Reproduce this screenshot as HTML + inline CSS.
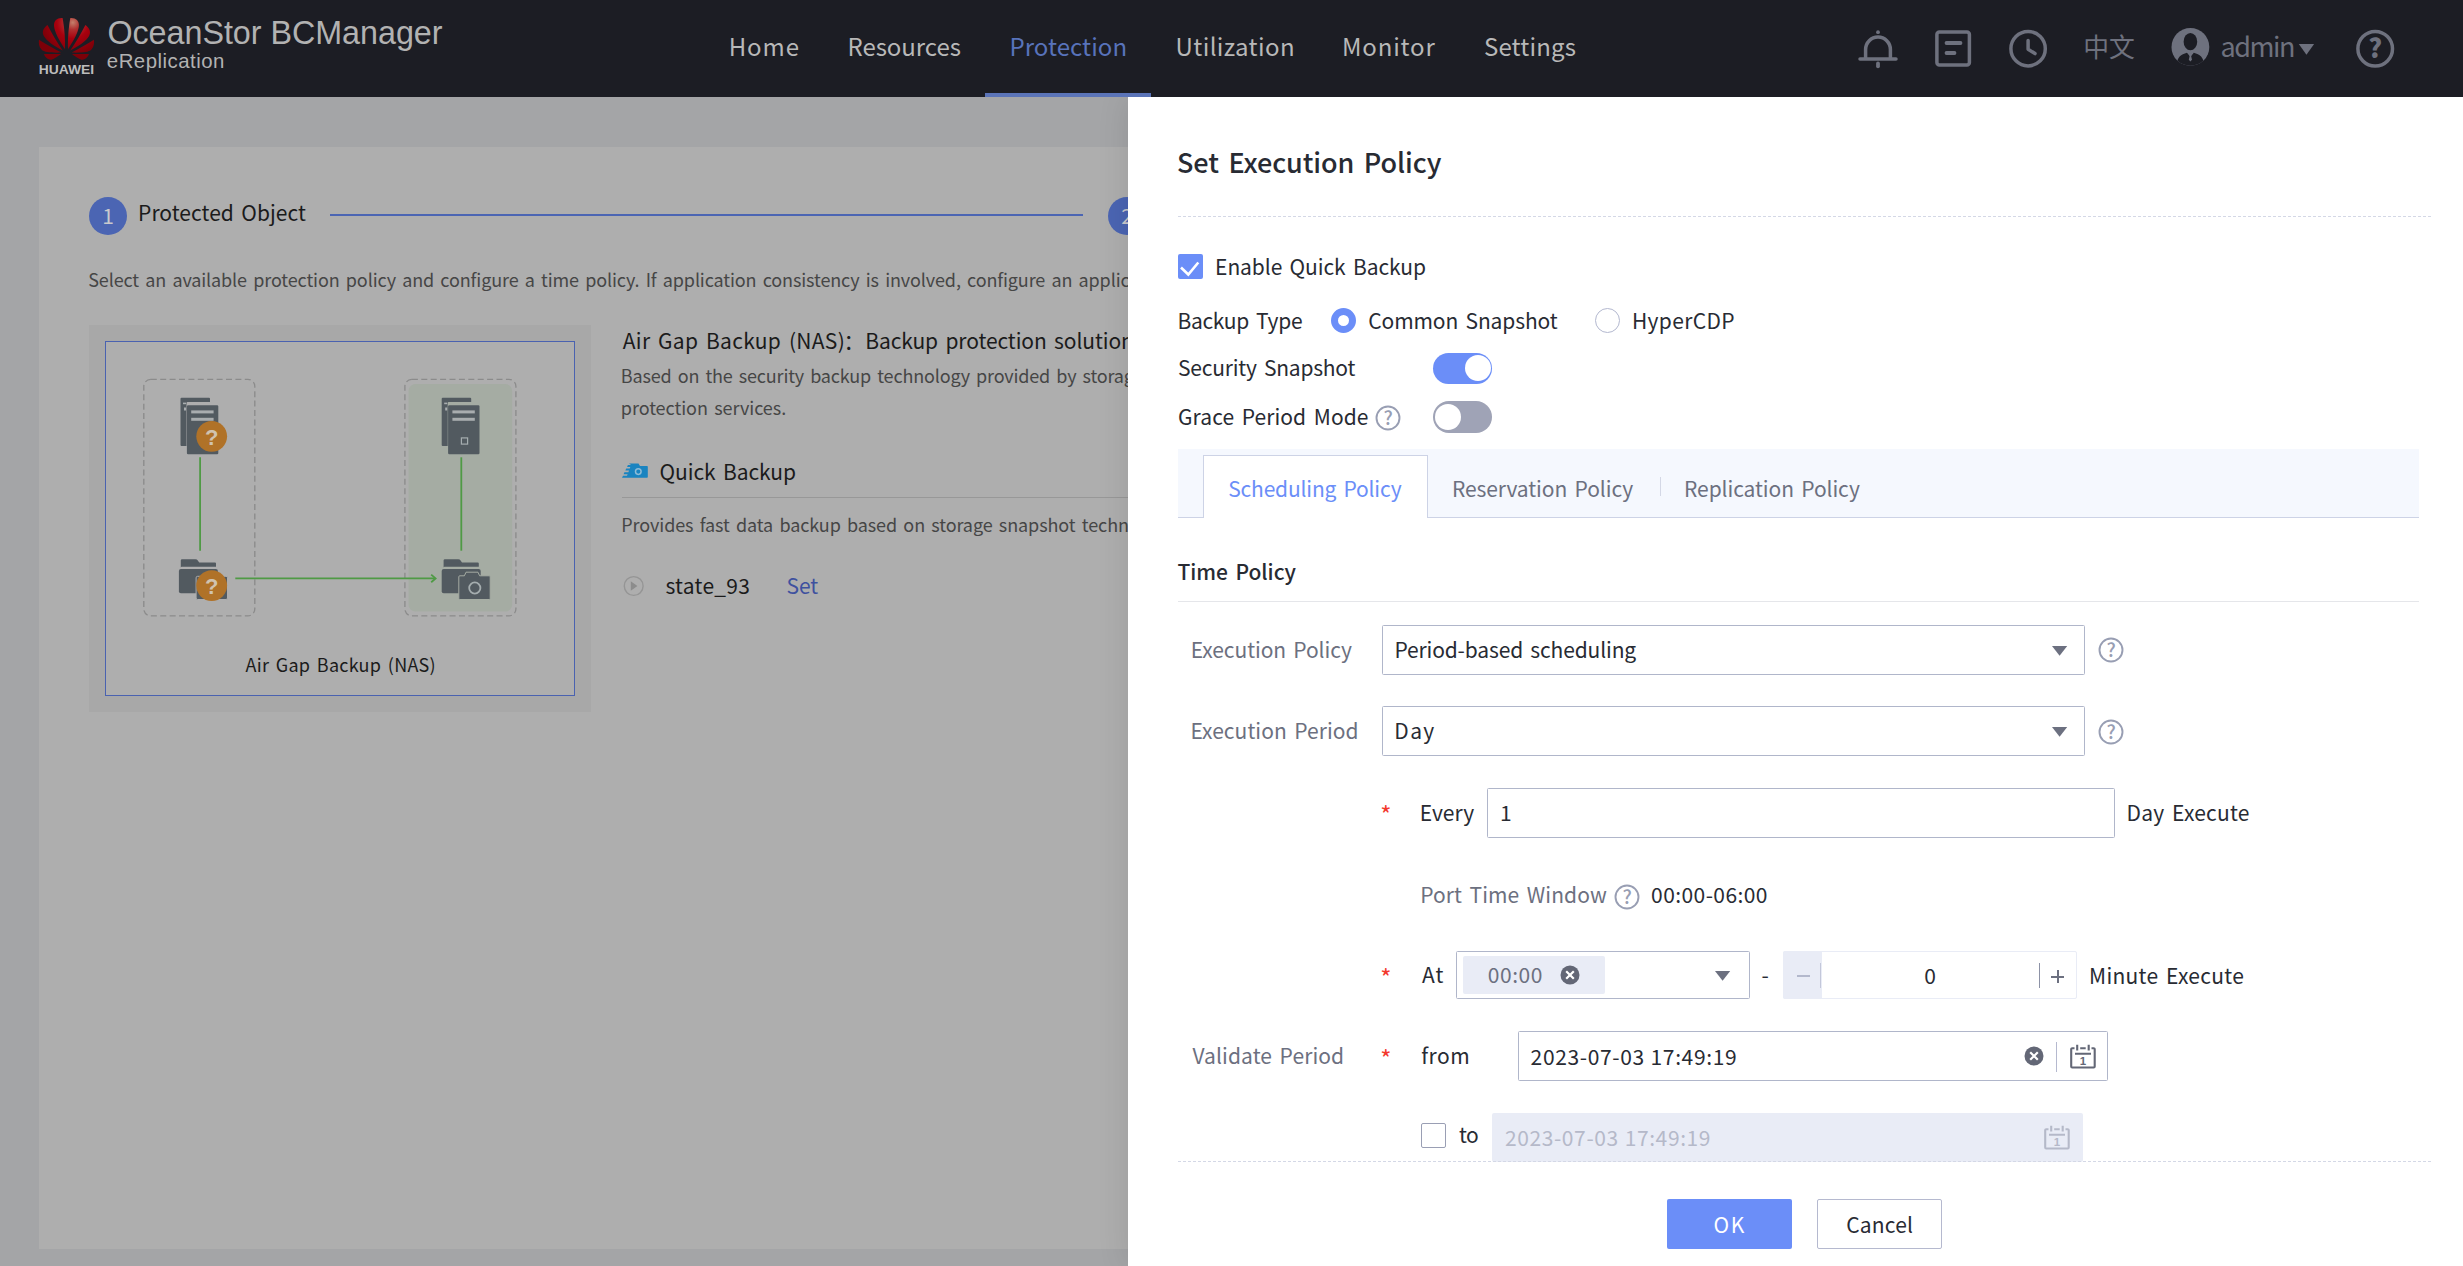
<!DOCTYPE html>
<html><head><meta charset="utf-8"><title>OceanStor BCManager</title>
<style>
html,body{margin:0;padding:0}
body{width:2463px;height:1266px;overflow:hidden;position:relative;background:#a4a5a7;font-family:"Noto Sans CJK SC",sans-serif}
.t{position:absolute;white-space:nowrap;line-height:40px;height:40px}
.b{position:absolute;box-sizing:border-box;display:block}
</style></head><body>
<div class="b" style="left:39px;top:147px;width:1200px;height:1102px;background:#aeaeae"></div>
<div class="b" style="left:89px;top:197px;width:38px;height:38px;background:#4b65b3;border-radius:50%"></div>
<div class="t" style="left:89px;top:195.04px;font-size:21px;color:#c9c9cd;font-family:'Noto Sans CJK SC',sans-serif;letter-spacing:-0.199px;word-spacing:2.73px;width:38px;text-align:center;">1</div>
<div class="t" style="left:138.1px;top:192.34px;font-size:21px;color:#1b1b1b;font-family:'Noto Sans CJK SC',sans-serif;letter-spacing:0.027px;word-spacing:2.73px;">Protected Object</div>
<div class="b" style="left:330px;top:214px;width:753px;height:2px;background:#4b65b3"></div>
<div class="b" style="left:1108px;top:197px;width:38px;height:38px;background:#4b65b3;border-radius:50%"></div>
<div class="t" style="left:1108px;top:195.04px;font-size:21px;color:#c9c9cd;font-family:'Noto Sans CJK SC',sans-serif;letter-spacing:-0.199px;word-spacing:2.73px;width:38px;text-align:center;">2</div>
<div class="t" style="left:88.2px;top:259.25px;font-size:18px;color:#464646;font-family:'Noto Sans CJK SC',sans-serif;letter-spacing:-0.122px;word-spacing:2.34px;">Select an available protection policy and configure a time policy. If application consistency is involved, configure an application consistency policy.</div>
<div class="b" style="left:89px;top:325px;width:502px;height:387px;background:#a8a8a8"></div>
<div class="b" style="left:105px;top:341px;width:470px;height:355px;background:#aeaeae;border:1px solid #4a62b0"></div>
<div class="t" style="left:245.6px;top:644.15px;font-size:18px;color:#1b1b1b;font-family:'Noto Sans CJK SC',sans-serif;letter-spacing:0.242px;word-spacing:2.34px;">Air Gap Backup (NAS)</div>
<svg class="b" style="left:0px;top:0px;" width="700" height="720" viewBox="0 0 700 720">
<rect x="143.8" y="379.3" width="111" height="236.6" rx="7" fill="none" stroke="#8b8b8b" stroke-width="1.3" stroke-dasharray="6 3.4"/>
<rect x="408.5" y="384" width="103.7" height="227.6" rx="7" fill="#a5aca3"/>
<rect x="404.9" y="379.3" width="111" height="236.6" rx="7" fill="none" stroke="#8b8b8b" stroke-width="1.3" stroke-dasharray="6 3.4"/>
<g>
<path d="M181.5 397.7h27.5a1 1 0 0 1 1 1v3.2h-22.5a1 1 0 0 0-1 1v43.1h-5a1 1 0 0 1-1-1v-46.3a1 1 0 0 1 1-1z" fill="#525a60"/>
<rect x="186.9" y="405.3" width="31.4" height="48.9" rx="1.2" fill="#525a60"/>
<rect x="191.2" y="410.4" width="22.4" height="3" fill="#a9adaf"/>
<rect x="191.2" y="417.8" width="22.4" height="3" fill="#a9adaf"/>
<rect x="183" y="402.6" width="3" height="1.6" fill="#a9adaf"/><rect x="184" y="407.5" width="2" height="3" fill="#a9adaf"/>
</g>
<g transform="translate(261.2,0)">
<path d="M181.5 397.7h27.5a1 1 0 0 1 1 1v3.2h-22.5a1 1 0 0 0-1 1v43.1h-5a1 1 0 0 1-1-1v-46.3a1 1 0 0 1 1-1z" fill="#525a60"/>
<rect x="186.9" y="405.3" width="31.4" height="48.9" rx="1.2" fill="#525a60"/>
<rect x="191.2" y="410.4" width="22.4" height="3" fill="#a9adaf"/>
<rect x="191.2" y="417.8" width="22.4" height="3" fill="#a9adaf"/>
<rect x="183" y="402.6" width="3" height="1.6" fill="#a9adaf"/><rect x="184" y="407.5" width="2" height="3" fill="#a9adaf"/>
</g>
<rect x="461.4" y="437.9" width="6.2" height="6.2" fill="#525a60" stroke="#a5adaf" stroke-width="1.2"/>
<line x1="200.1" y1="457.3" x2="200.1" y2="550.7" stroke="#4f9a45" stroke-width="1.8"/>
<line x1="461.3" y1="457.3" x2="461.3" y2="550.7" stroke="#4f9a45" stroke-width="1.8"/>
<g>
<path d="M182 559.3h13.5q1.5 0 2.3 1.2l1.4 2h15.8a1 1 0 0 1 1 1v3.3h-34.2a1 1 0 0 0-1 1v-7.5a1.2 1.2 0 0 1 1.2-1z" fill="#525a60"/>
<rect x="178.9" y="569" width="39" height="24.2" rx="2" fill="#525a60"/>
</g>
<g transform="translate(262.8,0)">
<path d="M182 559.3h13.5q1.5 0 2.3 1.2l1.4 2h15.8a1 1 0 0 1 1 1v3.3h-34.2a1 1 0 0 0-1 1v-7.5a1.2 1.2 0 0 1 1.2-1z" fill="#525a60"/>
<rect x="178.9" y="569" width="39" height="24.2" rx="2" fill="#525a60"/>
</g>
<rect x="196.1" y="576.3" width="31.4" height="23.2" rx="1.5" fill="#525a60" stroke="#aeaeae" stroke-width="1"/>
<line x1="235.3" y1="578.4" x2="434.5" y2="578.4" stroke="#4f9a45" stroke-width="1.8"/>
<path d="M431.2 574.6l4.4 3.8l-4.4 3.8" fill="none" stroke="#4f9a45" stroke-width="1.8"/>
<path d="M466 572.2h12l1.6 3.6h9.6a1 1 0 0 1 1 1v21.7a1 1 0 0 1-1 1h-29.4a1 1 0 0 1-1-1v-21.7a1 1 0 0 1 1-1h4.6z" fill="#525a60" stroke="#a5aca3" stroke-width="1"/>
<circle cx="474.8" cy="588" r="5.6" fill="none" stroke="#a5adaf" stroke-width="1.8"/>
<circle cx="211.7" cy="436.3" r="15.4" fill="#b07228"/>
<circle cx="211.7" cy="585.6" r="15.4" fill="#b07228"/>
<text x="211.7" y="444.6" style="font-family:Liberation Sans,sans-serif" font-size="22" font-weight="700" fill="#d0c3b0" text-anchor="middle">?</text>
<text x="211.7" y="593.9" style="font-family:Liberation Sans,sans-serif" font-size="22" font-weight="700" fill="#d0c3b0" text-anchor="middle">?</text>
</svg>
<div class="t" style="left:622.8px;top:320.14px;font-size:21px;color:#1b1b1b;font-family:'Noto Sans CJK SC',sans-serif;letter-spacing:0.295px;word-spacing:2.73px;">Air Gap Backup (NAS)</div>
<div class="t" style="left:843.5px;top:320.14px;font-size:21px;color:#1b1b1b;font-family:'Noto Sans CJK SC',sans-serif;letter-spacing:-0.199px;word-spacing:2.73px;">：</div>
<div class="t" style="left:865.2px;top:320.14px;font-size:21px;color:#1b1b1b;font-family:'Noto Sans CJK SC',sans-serif;letter-spacing:-0.088px;word-spacing:2.73px;">Backup protection solution for NAS file systems</div>
<div class="t" style="left:620.8px;top:354.65px;font-size:18px;color:#464646;font-family:'Noto Sans CJK SC',sans-serif;letter-spacing:-0.172px;word-spacing:2.34px;">Based on the security backup technology provided by storage, the solution implements Air Gap isolation and provides secure data</div>
<div class="t" style="left:620.8px;top:386.85px;font-size:18px;color:#464646;font-family:'Noto Sans CJK SC',sans-serif;letter-spacing:-0.053px;word-spacing:2.34px;">protection services.</div>
<svg class="b" style="left:622px;top:463px;" width="26" height="15" viewBox="0 0 26 15"><path d="M7 0.5h9.5l1.5 2.5h7a.8.8 0 0 1 .8.8v10.2a.8.8 0 0 1-.8.8h-25l1-2h4l.6-1.6h-4l.8-2h4l.6-1.6h-3.6l.8-2h3.6l.5-1.5h-3.2l.8-2h3.2z" fill="#1a84c0"/>
<circle cx="16.3" cy="8.6" r="2.8" fill="none" stroke="#8dbbd6" stroke-width="1.5"/></svg>
<div class="t" style="left:659.5px;top:450.54px;font-size:21px;color:#1b1b1b;font-family:'Noto Sans CJK SC',sans-serif;letter-spacing:-0.073px;word-spacing:2.73px;">Quick Backup</div>
<div class="b" style="left:622px;top:497px;width:620px;height:1px;background:#989898"></div>
<div class="t" style="left:621.3px;top:504.05px;font-size:18px;color:#464646;font-family:'Noto Sans CJK SC',sans-serif;letter-spacing:-0.096px;word-spacing:2.34px;">Provides fast data backup based on storage snapshot technologies.</div>
<svg class="b" style="left:622px;top:575px;" width="24" height="22" viewBox="0 0 24 22"><circle cx="11.7" cy="11" r="9.4" fill="none" stroke="#959595" stroke-width="1.4"/><path d="M8.8 6.3l6.6 4.7l-6.6 4.7z" fill="#8c8c8c"/></svg>
<div class="t" style="left:665.5px;top:564.84px;font-size:21px;color:#1b1b1b;font-family:'Noto Sans CJK SC',sans-serif;letter-spacing:0.257px;word-spacing:2.73px;">state_93</div>
<div class="t" style="left:786.5px;top:564.84px;font-size:21px;color:#3e519f;font-family:'Noto Sans CJK SC',sans-serif;letter-spacing:-0.100px;word-spacing:2.73px;">Set</div>
<div class="b" style="left:1128px;top:97px;width:1335px;height:1169px;background:#fff;box-shadow:0 0 30px rgba(0,0,0,0.11)"></div>
<div class="t" style="left:1177px;top:141.93px;font-size:27px;color:#282b33;font-weight:500;font-family:'Noto Sans CJK SC',sans-serif;letter-spacing:-0.074px;word-spacing:3.51px;">Set Execution Policy</div>
<div class="b" style="left:1178px;top:216px;width:1253px;height:1px;border-top:1px dashed #d4d8e6"></div>
<div class="b" style="left:1178px;top:254px;width:25px;height:25px;background:#6b8ef8;border-radius:2px"></div>
<svg class="b" style="left:1178px;top:254px;" width="25" height="25" viewBox="0 0 25 25"><path d="M3 13.500l7.300 7l10-12" fill="none" stroke="#fff" stroke-width="2.600"/></svg>
<div class="t" style="left:1215.1px;top:246.04px;font-size:21px;color:#282b33;font-family:'Noto Sans CJK SC',sans-serif;letter-spacing:-0.078px;word-spacing:2.73px;">Enable Quick Backup</div>
<div class="t" style="left:1177.4px;top:299.64px;font-size:21px;color:#282b33;font-family:'Noto Sans CJK SC',sans-serif;letter-spacing:-0.300px;word-spacing:2.73px;">Backup Type</div>
<div class="b" style="left:1331px;top:308px;width:25px;height:25px;border-radius:50%;border:7.600px solid #6b8ef8;background:#fff"></div>
<div class="t" style="left:1368.3px;top:299.64px;font-size:21px;color:#282b33;font-family:'Noto Sans CJK SC',sans-serif;letter-spacing:-0.114px;word-spacing:2.73px;">Common Snapshot</div>
<div class="b" style="left:1595px;top:308px;width:25px;height:25px;border-radius:50%;border:1.300px solid #b3b8cf;background:#fff"></div>
<div class="t" style="left:1631.9px;top:299.64px;font-size:21px;color:#282b33;font-family:'Noto Sans CJK SC',sans-serif;letter-spacing:0.371px;word-spacing:2.73px;">HyperCDP</div>
<div class="t" style="left:1178px;top:347.44px;font-size:21px;color:#282b33;font-family:'Noto Sans CJK SC',sans-serif;letter-spacing:-0.213px;word-spacing:2.73px;">Security Snapshot</div>
<div class="b" style="left:1433px;top:353px;width:59px;height:31px;border-radius:16px;background:#6b8ef8"></div>
<div class="b" style="left:1464.5px;top:355.3px;width:26px;height:26px;border-radius:50%;background:#fff"></div>
<div class="t" style="left:1178px;top:395.94px;font-size:21px;color:#282b33;font-family:'Noto Sans CJK SC',sans-serif;letter-spacing:0.088px;word-spacing:2.73px;">Grace Period Mode</div>
<svg class="b" style="left:1373.5px;top:404.3px;" width="28" height="28" viewBox="0 0 28 28"><circle cx="14" cy="14" r="11.5" fill="none" stroke="#989eb3" stroke-width="1.9"/><text x="14.2" y="21.300" style="font-family:Noto Sans CJK SC,sans-serif" font-weight="500" font-size="19" fill="#989eb3" text-anchor="middle">?</text></svg>
<div class="b" style="left:1433px;top:401px;width:59px;height:31.5px;border-radius:16px;background:#9fa3b6"></div>
<div class="b" style="left:1434.5px;top:404px;width:26px;height:26px;border-radius:50%;background:#fff"></div>
<div class="b" style="left:1178px;top:449px;width:1241px;height:69px;background:#f5f8fe;border-bottom:1px solid #cdd3e6"></div>
<div class="b" style="left:1203px;top:455px;width:225px;height:63px;background:#fff;border:1px solid #cdd3e6;border-bottom:none"></div>
<div class="t" style="left:1228.2px;top:468.04px;font-size:21px;color:#6b8ef8;font-family:'Noto Sans CJK SC',sans-serif;letter-spacing:-0.175px;word-spacing:2.73px;">Scheduling Policy</div>
<div class="t" style="left:1451.9px;top:468.04px;font-size:21px;color:#6c7080;font-family:'Noto Sans CJK SC',sans-serif;letter-spacing:-0.082px;word-spacing:2.73px;">Reservation Policy</div>
<div class="b" style="left:1660px;top:477px;width:1px;height:19px;background:#d4d8e6"></div>
<div class="t" style="left:1684.1px;top:468.04px;font-size:21px;color:#6c7080;font-family:'Noto Sans CJK SC',sans-serif;letter-spacing:-0.082px;word-spacing:2.73px;">Replication Policy</div>
<div class="t" style="left:1177.5px;top:550.84px;font-size:21px;color:#282b33;font-weight:500;font-family:'Noto Sans CJK SC',sans-serif;letter-spacing:-0.020px;word-spacing:2.73px;">Time Policy</div>
<div class="b" style="left:1178px;top:601px;width:1241px;height:1px;background:#e5e6ea"></div>
<div class="t" style="left:1190.8px;top:628.74px;font-size:21px;color:#6c7080;font-family:'Noto Sans CJK SC',sans-serif;letter-spacing:-0.093px;word-spacing:2.73px;">Execution Policy</div>
<div class="b" style="left:1382px;top:625px;width:703px;height:50px;border:1.400px solid #b0b6ca;border-radius:1.5px;background:#fff"></div>
<div class="t" style="left:1394.4px;top:629.24px;font-size:21px;color:#282b33;font-family:'Noto Sans CJK SC',sans-serif;letter-spacing:-0.136px;word-spacing:2.73px;">Period-based scheduling</div>
<svg class="b" style="left:2051.9px;top:645.7px;" width="16" height="10" viewBox="0 0 16 10"><path d="M0 0h15.200l-7.600 9.800z" fill="#6c7080"/></svg>
<svg class="b" style="left:2096.5px;top:636.4px;" width="28" height="28" viewBox="0 0 28 28"><circle cx="14" cy="14" r="11.5" fill="none" stroke="#989eb3" stroke-width="1.9"/><text x="14.2" y="21.300" style="font-family:Noto Sans CJK SC,sans-serif" font-weight="500" font-size="19" fill="#989eb3" text-anchor="middle">?</text></svg>
<div class="t" style="left:1190.4px;top:709.74px;font-size:21px;color:#6c7080;font-family:'Noto Sans CJK SC',sans-serif;letter-spacing:0.040px;word-spacing:2.73px;">Execution Period</div>
<div class="b" style="left:1382px;top:706px;width:703px;height:50px;border:1.400px solid #b0b6ca;border-radius:1.5px;background:#fff"></div>
<div class="t" style="left:1394.3px;top:710.24px;font-size:21px;color:#282b33;font-family:'Noto Sans CJK SC',sans-serif;letter-spacing:1.400px;word-spacing:2.73px;">Day</div>
<svg class="b" style="left:2051.9px;top:726.8px;" width="16" height="10" viewBox="0 0 16 10"><path d="M0 0h15.200l-7.600 9.800z" fill="#6c7080"/></svg>
<svg class="b" style="left:2096.5px;top:717.5px;" width="28" height="28" viewBox="0 0 28 28"><circle cx="14" cy="14" r="11.5" fill="none" stroke="#989eb3" stroke-width="1.9"/><text x="14.2" y="21.300" style="font-family:Noto Sans CJK SC,sans-serif" font-weight="500" font-size="19" fill="#989eb3" text-anchor="middle">?</text></svg>
<div class="t" style="left:1380.2px;top:794.04px;font-size:24px;color:#f3382c;font-family:'Noto Sans CJK SC',sans-serif;letter-spacing:-0.228px;word-spacing:3.12px;">*</div>
<div class="t" style="left:1419.8px;top:791.94px;font-size:21px;color:#282b33;font-family:'Noto Sans CJK SC',sans-serif;letter-spacing:0.000px;word-spacing:2.73px;">Every</div>
<div class="b" style="left:1487px;top:788px;width:628px;height:50px;border:1.400px solid #b0b6ca;border-radius:1.5px;background:#fff"></div>
<div class="t" style="left:1500px;top:792.44px;font-size:21px;color:#282b33;font-family:'Noto Sans CJK SC',sans-serif;letter-spacing:-0.199px;word-spacing:2.73px;">1</div>
<div class="t" style="left:2126.5px;top:792.44px;font-size:21px;color:#282b33;font-family:'Noto Sans CJK SC',sans-serif;letter-spacing:0.220px;word-spacing:2.73px;">Day Execute</div>
<div class="t" style="left:1420.2px;top:873.54px;font-size:21px;color:#6c7080;font-family:'Noto Sans CJK SC',sans-serif;letter-spacing:0.080px;word-spacing:2.73px;">Port Time Window</div>
<svg class="b" style="left:1612.5px;top:882.5px;" width="28" height="28" viewBox="0 0 28 28"><circle cx="14" cy="14" r="11.5" fill="none" stroke="#989eb3" stroke-width="1.9"/><text x="14.2" y="21.300" style="font-family:Noto Sans CJK SC,sans-serif" font-weight="500" font-size="19" fill="#989eb3" text-anchor="middle">?</text></svg>
<div class="t" style="left:1651.1px;top:873.54px;font-size:21px;color:#282b33;font-family:'Noto Sans CJK SC',sans-serif;letter-spacing:0.420px;word-spacing:2.73px;">00:00-06:00</div>
<div class="t" style="left:1380.2px;top:956.54px;font-size:24px;color:#f3382c;font-family:'Noto Sans CJK SC',sans-serif;letter-spacing:-0.228px;word-spacing:3.12px;">*</div>
<div class="t" style="left:1421.9px;top:954.04px;font-size:21px;color:#282b33;font-family:'Noto Sans CJK SC',sans-serif;letter-spacing:1.200px;word-spacing:2.73px;">At</div>
<div class="b" style="left:1456px;top:951.2px;width:294px;height:47.6px;border:1.400px solid #b0b6ca;border-radius:1.5px;background:#fff"></div>
<div class="b" style="left:1463px;top:956.2px;width:142px;height:37.8px;background:#e9ecf6;border-radius:2px"></div>
<div class="t" style="left:1487.8px;top:954.04px;font-size:21px;color:#6c7080;font-family:'Noto Sans CJK SC',sans-serif;letter-spacing:0.550px;word-spacing:2.73px;">00:00</div>
<svg class="b" style="left:1560.4px;top:965px;" width="20" height="20" viewBox="0 0 20 20"><circle cx="10" cy="10" r="9.5" fill="#636776"/><path d="M6.200 6.200l7.600 7.600M13.800 6.200l-7.600 7.600" stroke="#fff" stroke-width="2.200" fill="none"/></svg>
<svg class="b" style="left:1715.2px;top:970.6px;" width="16" height="10" viewBox="0 0 16 10"><path d="M0 0h15.200l-7.600 9.800z" fill="#6c7080"/></svg>
<div class="t" style="left:1761.5px;top:954.04px;font-size:21px;color:#282b33;font-family:'Noto Sans CJK SC',sans-serif;letter-spacing:-0.199px;word-spacing:2.73px;">-</div>
<div class="b" style="left:1783px;top:951.2px;width:294px;height:47.5px;border:1.400px solid #e9ecf6;border-radius:2px;background:#fff"></div>
<div class="b" style="left:1783px;top:951.2px;width:39px;height:47.5px;background:#e9ecf6;border-radius:2px 0 0 2px"></div>
<div class="b" style="left:1796.8px;top:975.3px;width:13.4px;height:2px;background:#b3b8cc"></div>
<div class="b" style="left:1820px;top:963.2px;width:1.4px;height:24.5px;background:#c3c7da"></div>
<div class="t" style="left:1880px;top:955.34px;font-size:21px;color:#282b33;font-family:'Noto Sans CJK SC',sans-serif;letter-spacing:-0.199px;word-spacing:2.73px;width:100px;text-align:center;">0</div>
<div class="b" style="left:2039px;top:963.2px;width:1.3px;height:24.5px;background:#8d92a6"></div>
<div class="b" style="left:2051px;top:975.7px;width:13px;height:2px;background:#6c7080"></div>
<div class="b" style="left:2056.5px;top:970.2px;width:2px;height:13px;background:#6c7080"></div>
<div class="t" style="left:2089.1px;top:954.54px;font-size:21px;color:#282b33;font-family:'Noto Sans CJK SC',sans-serif;letter-spacing:0.277px;word-spacing:2.73px;">Minute Execute</div>
<div class="t" style="left:1192.4px;top:1034.64px;font-size:21px;color:#6c7080;font-family:'Noto Sans CJK SC',sans-serif;letter-spacing:0.100px;word-spacing:2.73px;">Validate Period</div>
<div class="t" style="left:1380.2px;top:1037.54px;font-size:24px;color:#f3382c;font-family:'Noto Sans CJK SC',sans-serif;letter-spacing:-0.228px;word-spacing:3.12px;">*</div>
<div class="t" style="left:1421.2px;top:1034.64px;font-size:21px;color:#282b33;font-family:'Noto Sans CJK SC',sans-serif;letter-spacing:0.533px;word-spacing:2.73px;">from</div>
<div class="b" style="left:1518px;top:1031px;width:590px;height:50px;border:1.400px solid #b0b6ca;border-radius:1.5px;background:#fff"></div>
<div class="t" style="left:1530.6px;top:1035.74px;font-size:21px;color:#282b33;font-family:'Noto Sans CJK SC',sans-serif;letter-spacing:0.633px;word-spacing:0.50px;">2023-07-03 17:49:19</div>
<svg class="b" style="left:2024.4px;top:1046.4px;" width="20" height="20" viewBox="0 0 20 20"><circle cx="10" cy="10" r="9.5" fill="#636776"/><path d="M6.200 6.200l7.600 7.600M13.800 6.200l-7.600 7.600" stroke="#fff" stroke-width="2.200" fill="none"/></svg>
<div class="b" style="left:2056px;top:1041.5px;width:1.3px;height:30px;background:#b5b9cf"></div>
<svg class="b" style="left:2069.5px;top:1044px;" width="26" height="25" viewBox="0 0 26 25"><path d="M4.500 4.200H2.200a1 1 0 0 0-1 1V22.500a1 1 0 0 0 1 1H23.700a1 1 0 0 0 1-1V5.200a1 1 0 0 0-1-1H21.500" fill="none" stroke="#636776" stroke-width="2.100"/>
<path d="M7.200 0.800v5.600M18.700 0.800v5.600M10.200 4.200h5.500M5 9.700h16" fill="none" stroke="#636776" stroke-width="2.100"/>
<text x="13" y="20.800" style="font-family:Liberation Sans,sans-serif" font-weight="700" font-size="11.500" fill="#636776" text-anchor="middle">1</text></svg>
<div class="b" style="left:1421px;top:1123px;width:25px;height:25px;border:1.300px solid #9a9fb4;border-radius:2px;background:#fff"></div>
<div class="t" style="left:1458.9px;top:1114.24px;font-size:21px;color:#282b33;font-family:'Noto Sans CJK SC',sans-serif;letter-spacing:-0.400px;word-spacing:2.73px;">to</div>
<div class="b" style="left:1492px;top:1113px;width:591px;height:48.5px;background:#e9ecf6;border-radius:2px"></div>
<div class="t" style="left:1504.9px;top:1116.74px;font-size:21px;color:#b5b9c9;font-family:'Noto Sans CJK SC',sans-serif;letter-spacing:0.611px;word-spacing:0.50px;">2023-07-03 17:49:19</div>
<svg class="b" style="left:2043.8px;top:1125.3px;" width="26" height="25" viewBox="0 0 26 25"><path d="M4.500 4.200H2.200a1 1 0 0 0-1 1V22.500a1 1 0 0 0 1 1H23.700a1 1 0 0 0 1-1V5.200a1 1 0 0 0-1-1H21.500" fill="none" stroke="#b5b9c9" stroke-width="2.100"/>
<path d="M7.200 0.800v5.600M18.700 0.800v5.600M10.200 4.200h5.500M5 9.700h16" fill="none" stroke="#b5b9c9" stroke-width="2.100"/>
<text x="13" y="20.800" style="font-family:Liberation Sans,sans-serif" font-weight="700" font-size="11.500" fill="#b5b9c9" text-anchor="middle">1</text></svg>
<div class="b" style="left:1178px;top:1161px;width:1253px;height:1px;border-top:1px dashed #d4d8e6"></div>
<div class="b" style="left:1667px;top:1199px;width:125px;height:50px;background:#6b8ef8;border-radius:2px"></div>
<div class="t" style="left:1713.4px;top:1203.84px;font-size:21px;color:#fff;font-family:'Noto Sans CJK SC',sans-serif;letter-spacing:1.800px;word-spacing:2.73px;">OK</div>
<div class="b" style="left:1817px;top:1199px;width:125px;height:50px;border:1.300px solid #b5b9cf;border-radius:2px;background:#fff"></div>
<div class="t" style="left:1846.2px;top:1203.84px;font-size:21px;color:#282b33;font-family:'Noto Sans CJK SC',sans-serif;letter-spacing:0.200px;word-spacing:2.73px;">Cancel</div>
<div class="b" style="left:0px;top:0px;width:2463px;height:97px;background:#1c1d24"></div>
<svg class="b" style="left:30px;top:10px;" width="80" height="75" viewBox="0 0 80 75"><defs>
<radialGradient id="lg" gradientUnits="userSpaceOnUse" cx="42.8" cy="12.5" r="32">
<stop offset="0" stop-color="#c4806c"/><stop offset="0.22" stop-color="#b03030"/><stop offset="0.5" stop-color="#a8000e"/><stop offset="1" stop-color="#7c0008"/></radialGradient>
</defs>
<g fill="url(#lg)">
<path d="M34.9 39.2C29 30 24.5 22 24 16C23.6 10.5 27.5 7.6 32.6 8.1C34.2 17 35.4 29 34.9 39.2z"/>
<path d="M38 39.2C43.9 30 48.4 22 48.9 16C49.3 10.5 45.4 7.6 40.3 8.1C38.7 17 37.5 29 38 39.2z"/>
<path d="M32.7 40.6C24 36 16.5 31 13.8 26C11.5 21.5 13.8 17.5 17.5 15C21.5 23 27.5 33 32.7 40.6z"/>
<path d="M40.2 40.6C48.9 36 56.4 31 59.1 26C61.4 21.5 59.1 17.5 55.4 15C51.4 23 45.4 33 40.2 40.6z"/>
<path d="M31.2 42.6C22 42.8 14.5 42.6 11.5 39.5C8.8 36.6 8.6 33 9 29.8C15.5 33.8 24 38.8 31.2 42.6z"/>
<path d="M41.7 42.6C50.9 42.8 58.4 42.6 61.4 39.5C64.1 36.6 64.3 33 63.9 29.8C57.400 33.8 48.9 38.8 41.7 42.6z"/>
<path d="M30.9 43.9C26 47.5 22.5 50.2 19.5 49.6C16.8 49 15 46.8 13.9 44.1C19 44 25 44 30.9 43.9z"/>
<path d="M42 43.9C46.9 47.5 50.4 50.2 53.4 49.6C56.1 49 57.9 46.8 59 44.1C53.9 44 47.9 44 42 43.900z"/>
</g>
<text x="36.5" y="64.3" style="font-family:Liberation Sans,sans-serif" font-weight="700" font-size="12.4" fill="#bcbcbc" text-anchor="middle" textLength="55.4" lengthAdjust="spacingAndGlyphs">HUAWEI</text></svg>
<div class="t" style="left:107.4px;top:12.71px;font-size:32.3px;color:#b2b2b2;font-family:'Liberation Sans',sans-serif;letter-spacing:-0.033px;word-spacing:0.00px;">OceanStor BCManager</div>
<div class="t" style="left:106.8px;top:40.63px;font-size:20.4px;color:#b2b2b2;font-family:'Liberation Sans',sans-serif;letter-spacing:0.491px;word-spacing:0.00px;">eReplication</div>
<div class="t" style="left:728.7px;top:25.84px;font-size:24px;color:#b8b8b8;font-family:'Noto Sans CJK SC',sans-serif;letter-spacing:0.933px;word-spacing:3.12px;">Home</div>
<div class="t" style="left:847.5px;top:25.84px;font-size:24px;color:#b8b8b8;font-family:'Noto Sans CJK SC',sans-serif;letter-spacing:-0.050px;word-spacing:3.12px;">Resources</div>
<div class="t" style="left:1009.5px;top:25.84px;font-size:24px;color:#5873bb;font-family:'Noto Sans CJK SC',sans-serif;letter-spacing:0.044px;word-spacing:3.12px;">Protection</div>
<div class="t" style="left:1175.5px;top:25.84px;font-size:24px;color:#b8b8b8;font-family:'Noto Sans CJK SC',sans-serif;letter-spacing:0.400px;word-spacing:3.12px;">Utilization</div>
<div class="t" style="left:1342px;top:25.84px;font-size:24px;color:#b8b8b8;font-family:'Noto Sans CJK SC',sans-serif;letter-spacing:0.833px;word-spacing:3.12px;">Monitor</div>
<div class="t" style="left:1484px;top:25.84px;font-size:24px;color:#b8b8b8;font-family:'Noto Sans CJK SC',sans-serif;letter-spacing:0.143px;word-spacing:3.12px;">Settings</div>
<div class="b" style="left:985px;top:93px;width:166px;height:4px;background:#5b74b8"></div>
<svg class="b" style="left:1855px;top:26px;" width="46" height="46" viewBox="0 0 46 46"><path d="M10.6 32.5V23.5a12.4 12.4 0 0 1 24.800 0V32.500" fill="none" stroke="#6e717e" stroke-width="3.5"/>
<line x1="5" y1="33" x2="41" y2="33" stroke="#6e717e" stroke-width="3.5" stroke-linecap="round"/>
<line x1="23" y1="37.5" x2="23" y2="40.300" stroke="#6e717e" stroke-width="3.8" stroke-linecap="round"/>
<circle cx="23" cy="6.2" r="1.9" fill="#6e717e"/></svg>
<svg class="b" style="left:1931px;top:26px;" width="46" height="46" viewBox="0 0 46 46"><rect x="5.9" y="5.900" width="32.5" height="33" rx="2.500" fill="none" stroke="#6e717e" stroke-width="3.5"/>
<line x1="15.5" y1="17" x2="29.5" y2="17" stroke="#6e717e" stroke-width="3.8" stroke-linecap="round"/>
<line x1="15.5" y1="27" x2="23.5" y2="27" stroke="#6e717e" stroke-width="3.8" stroke-linecap="round"/></svg>
<svg class="b" style="left:2005px;top:26px;" width="46" height="46" viewBox="0 0 46 46"><circle cx="23.1" cy="22.7" r="17.2" fill="none" stroke="#6e717e" stroke-width="3.5"/>
<path d="M23.1 14.500V23.200L30 27.600" fill="none" stroke="#6e717e" stroke-width="3.5" stroke-linecap="round" stroke-linejoin="round"/></svg>
<div class="t" style="left:2083.3px;top:25.55px;font-size:25.8px;color:#6e717e;font-family:'Noto Sans CJK SC',sans-serif;letter-spacing:0.000px;word-spacing:3.35px;">中文</div>
<svg class="b" style="left:2168px;top:24px;" width="46" height="46" viewBox="0 0 46 46"><defs><clipPath id="avc"><circle cx="22.4" cy="22.900" r="18.9"/></clipPath></defs>
<circle cx="22.4" cy="22.9" r="18.9" fill="#6e717e"/>
<g clip-path="url(#avc)" fill="#1c1d24">
<ellipse cx="22.4" cy="17.7" rx="6.8" ry="8.6"/>
<path d="M8.500 42C9 33 13 30.500 19 28.800L22.400 33L25.800 28.800C31.800 30.500 35.800 33 36.300 42z"/>
</g>
<path d="M21 29.800h2.800l-.7 2l.9 4l-1.600 1.600l-1.600-1.600l.9-4z" fill="#6e717e"/></svg>
<div class="t" style="left:2220.6px;top:26.43px;font-size:27px;color:#6e717e;font-family:'Noto Sans CJK SC',sans-serif;letter-spacing:-1.500px;word-spacing:3.51px;">admin</div>
<svg class="b" style="left:2298px;top:43px;" width="18" height="14" viewBox="0 0 18 14"><path d="M0.800 1h15.300l-7.650 10.800z" fill="#6e717e"/></svg>
<svg class="b" style="left:2352px;top:26px;" width="46" height="46" viewBox="0 0 46 46"><circle cx="23.200" cy="22.700" r="17.300" fill="none" stroke="#6e717e" stroke-width="3.5"/>
<text x="23.2" y="31.6" style="font-family:Noto Sans CJK SC,sans-serif" font-weight="900" font-size="26" fill="#6e717e" text-anchor="middle">?</text></svg>
</body></html>
